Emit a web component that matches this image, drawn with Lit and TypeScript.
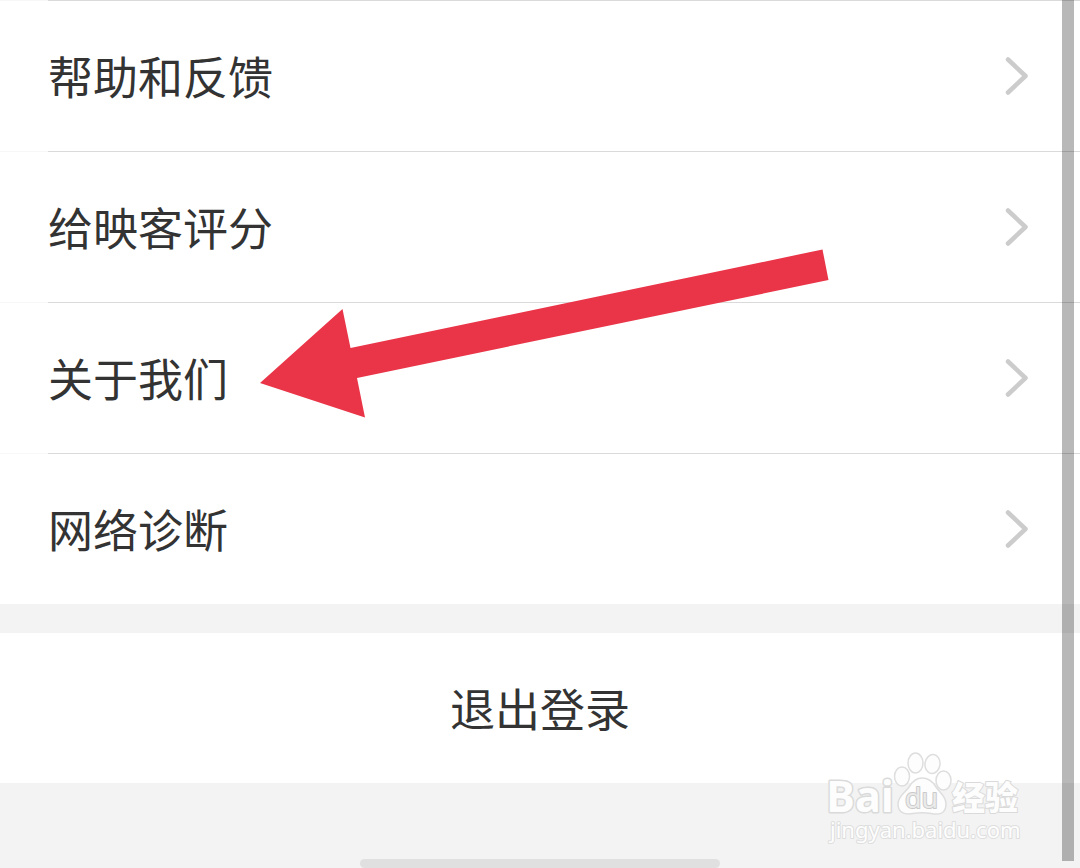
import { LitElement, html, css, svg } from "lit";
import { customElement } from "lit/decorators.js";

const ROWS = ["帮助和反馈", "给映客评分", "关于我们", "网络诊断"];
const HIGHLIGHTED = "关于我们";

const chevron = html`
  <svg class="chevron" viewBox="0 0 24 40" aria-hidden="true">
    <path d="M4 3.500 L21.500 20 L4 36.500" />
  </svg>
`;

const pointer = html`
  <svg class="pointer" viewBox="0 0 570 170" aria-hidden="true">
    <path d="M0 134 L82.500 60 L90.500 99 L562.500 0.500 L568.500 31 L97 129 L105 168.500 Z" />
  </svg>
`;

const toes = svg`
  <ellipse cx="76" cy="26.500" rx="7.500" ry="9.500" />
  <ellipse cx="89.500" cy="13" rx="7.500" ry="10" />
  <ellipse cx="106.500" cy="14" rx="7.500" ry="9.500" transform="rotate(8 106.500 14)" />
  <ellipse cx="117.500" cy="30.500" rx="7.500" ry="9.500" />
`;

@customElement("app-root")
export class AppRoot extends LitElement {
  static styles = css`
    :host {
      display: block;
      font-family: "Noto Sans CJK SC", "Noto Sans", sans-serif;
      color: #333;
    }
    .page {
      position: relative;
      box-sizing: border-box;
      min-height: 100vh;
      overflow: hidden;
      background: #f3f3f3;
    }
    .list {
      list-style: none;
      margin: 0;
      padding: 0;
      background: #fff;
    }
    .item {
      position: relative;
    }
    .item::before {
      content: "";
      display: block;
      height: 1px;
      background: linear-gradient(to right, #f7f7f7 48px, #dadada 48px);
    }
    .row {
      display: flex;
      align-items: center;
      justify-content: space-between;
      height: 150px;
      padding: 0 52px 0 48px;
      color: inherit;
      text-decoration: none;
      font-size: 45px;
      line-height: 60px;
    }
    .chevron {
      width: 24px;
      height: 40px;
      fill: none;
      stroke: #ccc;
      stroke-width: 4.5;
      stroke-linecap: round;
      stroke-linejoin: round;
    }
    .pointer {
      position: absolute;
      z-index: 1;
      left: 260px;
      top: -53px;
      width: 570px;
      height: 170px;
      fill: #ea3548;
      pointer-events: none;
    }
    .logout {
      display: block;
      width: 100%;
      height: 150px;
      margin: 29px 0 0;
      padding: 0;
      border: 0;
      background: #fff;
      color: inherit;
      font: inherit;
      font-size: 45px;
      line-height: 60px;
    }
    .scrollbar {
      position: absolute;
      z-index: 2;
      top: 0;
      right: 6px;
      bottom: 7px;
      width: 12px;
      background: rgba(0, 0, 0, 0.28);
    }
    .home {
      position: absolute;
      left: 33.333%;
      right: 33.333%;
      bottom: 0;
      height: 9px;
      border-radius: 5px;
      background: #e0e0e0;
    }
    .watermark {
      position: absolute;
      right: 54px;
      bottom: 18px;
      width: 200px;
      height: 100px;
      overflow: visible;
      pointer-events: none;
    }
    .watermark .mark {
      fill: #fdfdfd;
      stroke: #dedede;
      stroke-width: 1.5;
    }
    .watermark text {
      fill: #fdfdfd;
      stroke: #dadada;
      stroke-width: 3;
      paint-order: stroke;
      stroke-linejoin: round;
    }
    .watermark .brand {
      font: 700 43px "Open Sans", sans-serif;
    }
    .watermark .du {
      font: 500 27px "Open Sans", sans-serif;
      fill: #ebebeb;
      stroke: #cacaca;
      stroke-width: 2;
    }
    .watermark .name {
      font: 900 33px "Noto Sans CJK SC", sans-serif;
      stroke-width: 2;
    }
    .watermark .site {
      font: 400 22px "Noto Sans", sans-serif;
      stroke: #dedede;
      stroke-width: 2;
    }
  `;

  render() {
    return html`
      <main class="page">
        <ul class="list">
          ${ROWS.map(
            (label) => html`
              <li class="item">
                <a class="row" href="#"><span>${label}</span>${chevron}</a>
                ${label === HIGHLIGHTED ? pointer : null}
              </li>
            `
          )}
        </ul>
        <button class="logout" type="button">退出登录</button>
        <svg class="watermark" viewBox="0 0 200 100">
          <text class="brand" x="0" y="62">Bai</text>
          <g class="mark">
            ${toes}
            <path
              d="M96 28 C103 28 107 32 110 37 C114 43 120 46 120 54 C120 64 113 65 105 63.500 C99 62.500 93 62.500 87 63.500 C79 65 72 63 72 54 C72 46 79 43 83 37 C86 32 90 28 96 28 Z"
            />
          </g>
          <text class="du" x="79" y="58">du</text>
          <text class="name" x="126" y="60">经验</text>
          <text class="site" x="4" y="88">jingyan.baidu.com</text>
        </svg>
        <div class="home"></div>
        <div class="scrollbar"></div>
      </main>
    `;
  }
}
